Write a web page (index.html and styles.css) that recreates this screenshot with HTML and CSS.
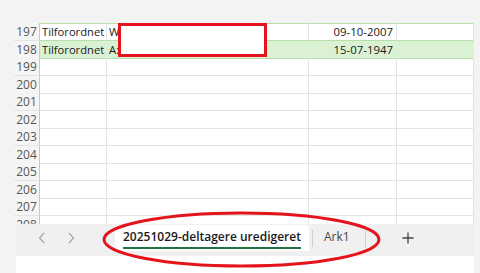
FILE: index.html
```html
<!DOCTYPE html>
<html>
<head>
<meta charset="utf-8">
<link rel="stylesheet" href="styles.css">
</head>
<body>
<div class="app">
  <div class="grid">
    <div class="row sel-top">
      <div class="rh">197</div>
      <div class="c cb">Tilforordnet</div>
      <div class="c cc">W</div>
      <div class="c cd">09-10-2007</div>
      <div class="c ce"></div>
    </div>
    <div class="row sel">
      <div class="rh">198</div>
      <div class="c cb">Tilforordnet</div>
      <div class="c cc">A:</div>
      <div class="c cd">15-07-1947</div>
      <div class="c ce"></div>
    </div>
    <div class="row"><div class="rh">199</div><div class="c"></div><div class="c"></div><div class="c"></div><div class="c"></div></div>
    <div class="row"><div class="rh">200</div><div class="c"></div><div class="c"></div><div class="c"></div><div class="c"></div></div>
    <div class="row"><div class="rh">201</div><div class="c"></div><div class="c"></div><div class="c"></div><div class="c"></div></div>
    <div class="row"><div class="rh">202</div><div class="c"></div><div class="c"></div><div class="c"></div><div class="c"></div></div>
    <div class="row"><div class="rh">203</div><div class="c"></div><div class="c"></div><div class="c"></div><div class="c"></div></div>
    <div class="row"><div class="rh">204</div><div class="c"></div><div class="c"></div><div class="c"></div><div class="c"></div></div>
    <div class="row"><div class="rh">205</div><div class="c"></div><div class="c"></div><div class="c"></div><div class="c"></div></div>
    <div class="row"><div class="rh">206</div><div class="c"></div><div class="c"></div><div class="c"></div><div class="c"></div></div>
    <div class="row"><div class="rh">207</div><div class="c"></div><div class="c"></div><div class="c"></div><div class="c"></div></div>
    <div class="row"><div class="rh">208</div><div class="c"></div><div class="c"></div><div class="c"></div><div class="c"></div></div>
  </div>
  <div class="tabbar">
    <div class="nav">
      <svg width="8" height="12" viewBox="0 0 8 12"><path d="M6 1 L1.5 6 L6 11" fill="none" stroke="#a6a6a6" stroke-width="1.2"/></svg>
    </div>
    <div class="nav">
      <svg width="8" height="12" viewBox="0 0 8 12"><path d="M2 1 L6.5 6 L2 11" fill="none" stroke="#a6a6a6" stroke-width="1.2"/></svg>
    </div>
    <div class="tab active"><span class="tabtext">20251029-deltagere uredigeret</span></div>
    <div class="sep"></div>
    <div class="tab other"><span class="othertext">Ark1</span></div>
    <div class="sep"></div>
    <div class="plus">
      <svg width="12" height="12" viewBox="0 0 12 12"><path d="M6 0.5 V11.5 M0.5 6 H11.5" stroke="#444" stroke-width="1.3" fill="none"/></svg>
    </div>
  </div>
  <div class="bottom"></div>
</div>
<div class="redact"></div>
<svg class="circle" width="480" height="273" viewBox="0 0 480 273">
  <ellipse cx="241.5" cy="239.5" rx="137.5" ry="26.5" fill="none" stroke="#e5141c" stroke-width="3"/>
</svg>
</body>
</html>
```
FILE: styles.css
```css
html, body {
  margin: 0;
  padding: 0;
}
body {
  width: 480px;
  height: 273px;
  overflow: hidden;
  background: #f3f3f3;
  position: relative;
  font-family: "Open Sans", "Liberation Sans", Arial, sans-serif;
}
.app {
  padding-top: 23px;
  padding-left: 14px;
  width: 460px;
}
.grid {
  height: 201px;
  overflow: hidden;
  background: #fff;
}
.row {
  display: grid;
  grid-template-columns: 26px 67px 202px 88px 77px;
  height: 17.5px;
}
.rh {
  background: #f5f5f5;
  color: #555;
  font-size: 12px;
  line-height: 17px;
  text-align: center;
  border-right: 1px solid #c8c8c8;
  border-bottom: 1px solid #e4e4e4;
  box-sizing: border-box;
}
.c {
  border-right: 1px solid #e4e4e4;
  border-bottom: 1px solid #e4e4e4;
  box-sizing: border-box;
  font-size: 11.2px;
  font-weight: 500;
  line-height: 17px;
  color: #1a1a1a;
  white-space: nowrap;
  overflow: hidden;
  padding-left: 2px;
}
.cd {
  text-align: right;
  padding-right: 3px;
  font-size: 11.4px;
}
.sel-top .c {
  border-top: 1px solid #b6dfaa;
  line-height: 15px;
  border-bottom-color: #b6dfaa;
}
.sel .c {
  background: #dbf1d3;
  border-bottom: 1px solid #b6dfaa;
  border-right-color: #dbf1d3;
}
.tabbar {
  margin-left: 2px;
  height: 32px;
  background: #f0f0f0;
  display: flex;
  align-items: flex-start;
  padding-left: 11px;
  padding-top: 1px;
  box-sizing: border-box;
}
.nav {
  width: 29px;
  height: 26px;
  display: flex;
  align-items: center;
  justify-content: center;
}
.tab {
  height: 26px;
  box-sizing: border-box;
}
.active {
  margin-left: 30px;
  background: #fff;
  padding: 0 8px;
  border-radius: 3px 3px 0 0;
}
.tabtext {
  display: block;
  margin-top: 4px;
  font-size: 12px;
  font-weight: 600;
  color: #1a1a1a;
  line-height: 15px;
  padding-bottom: 3px;
  border-bottom: 2px solid #217346;
}
.sep {
  width: 1px;
  height: 17px;
  background: #cfcfcf;
  margin-left: 3px;
  margin-top: 5px;
}
.other {
  padding: 0 12px 0 11px;
}
.othertext {
  display: block;
  margin-top: 4px;
  font-size: 12px;
  line-height: 15px;
  color: #444;
}
.plus {
  margin-left: 36px;
  height: 26px;
  display: flex;
  align-items: center;
}
.bottom {
  margin-left: 2px;
  height: 17px;
  background: #fff;
}
.redact {
  position: absolute;
  left: 118px;
  top: 23px;
  width: 149px;
  height: 34px;
  box-sizing: border-box;
  border: 3px solid #e5141c;
  background: #fff;
}
.circle {
  position: absolute;
  left: 0;
  top: 0;
  pointer-events: none;
}
```
